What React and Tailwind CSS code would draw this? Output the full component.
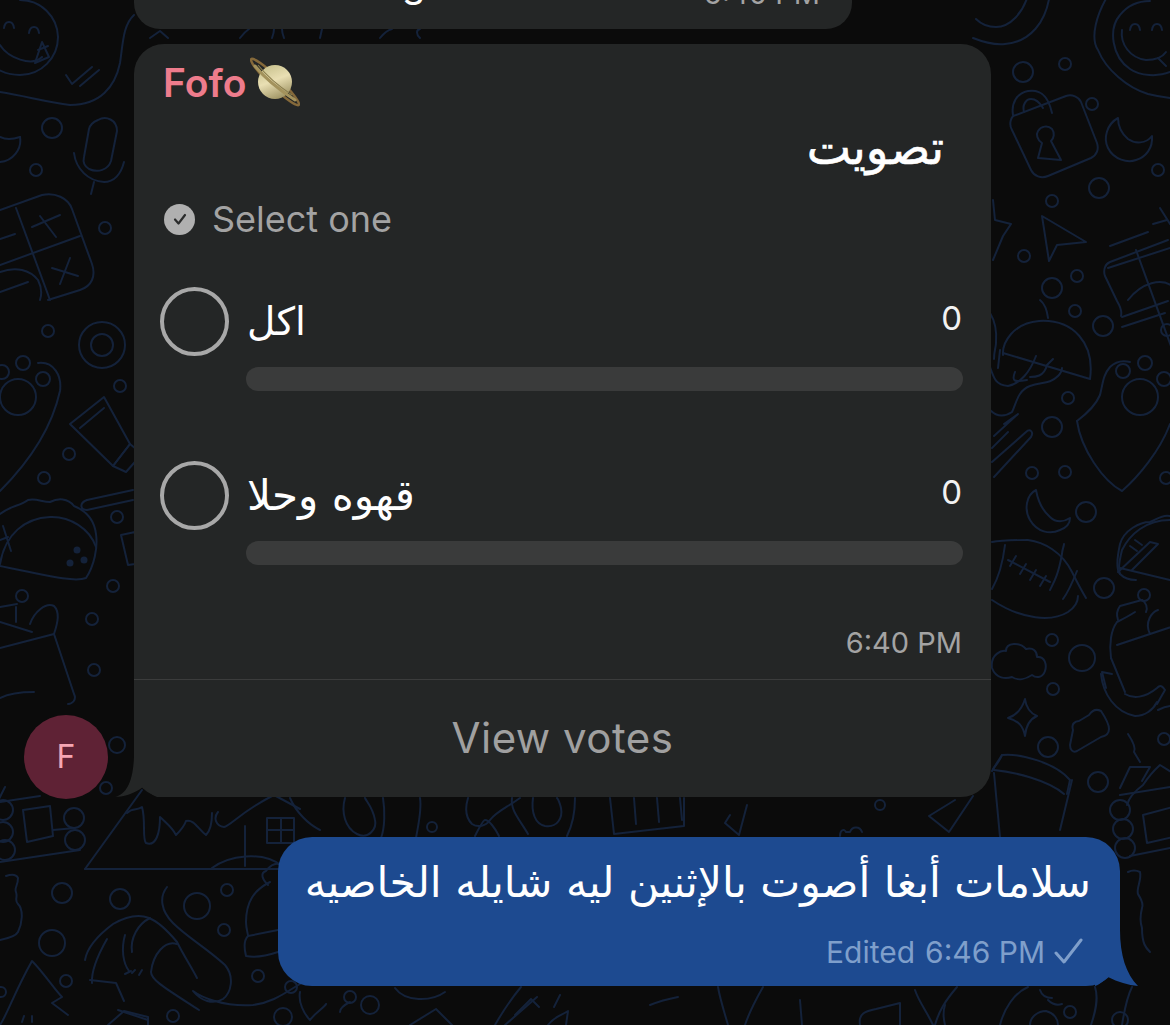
const circles = [
  [52,128,10],[36,170,6],[105,228,6],[48,331,6],[120,386,6],[69,454,6],[44,478,6],[117,517,6],[113,586,6],[22,596,6],[92,619,6],[94,670,6],
  [102,345,11],[102,345,23],[18,397,18],[23,363,7],[43,379,7],[2,372,7],
  [1023,72,10],[1065,64,6],[1092,104,6],[1099,188,10],[1052,201,6],[1158,170,6],[1024,256,6],[1052,288,10],[1077,276,6],
  [1075,311,6],[1103,326,10],[1068,398,6],[1052,427,10],[1032,473,6],[1065,472,6],[1086,512,10],[1104,588,10],[1144,595,6],[1166,478,6],
  [1123,371,7],[1145,363,7],[1140,397,18],[1164,379,7],[1167,330,6],
  [1052,640,6],[1082,658,13],[1053,689,6],[1048,747,10],[1098,782,10],[1164,739,6],
  [1120,810,10],[1123,829,10],[1125,848,10],
  [62,893,10],[120,899,10],[52,943,13],[66,981,6],[197,906,13],[227,890,6],[224,930,6],[258,976,6],[283,1017,9],[173,1016,6],[291,987,6],[1,992,5],
  [117,745,8],[106,788,6],
  [74,818,10],[75,840,10],[3,810,10],[3,832,10],[5,850,10],
  [880,805,5],[432,827,5],
  [350,997,6],[370,1005,9],[1070,1012,6],[1120,1020,8],
]

const doodles = [
  // left top smiley, ticks, big curve
  'M58 37a38 38 0 0 1-38 38C5 75-8 68-15 58', 'M20 0a38 38 0 0 1 38 37', 'M0 45c8 13 32 22 42 12',
  'M4 28c1-8 9-8 10 0', 'M29 33c1-8 9-8 10 0', 'M42 42l7 15-14 6z', 'M38 50l10-4',
  'M66 75l6 9 20-17', 'M80 86l19-16',
  'M0 92c25 4 47 10 70 13 30 0 45-18 50-42 3-20 3-38 14-48',
  // mic
  'M98 120c8-5 19 0 19 11l-6 30c-3 9-13 12-22 8-5-3-6-8-5-12l5-28c1-4 4-7 9-9z',
  'M74 153c2 16 14 28 30 29 10 0 17-8 20-20', 'M94 182l-3 12',
  // left moon
  'M20 137c-6 2-14 3-20 0', 'M20 137c2 12-7 24-20 25',
  // calculator left
  'M0 210l42-15c13-3 26 3 30 14l20 55c4 12 0 22-12 26l-32 10', 'M16 208l34 92', 'M0 265l80-29', 'M0 239l15-5',
  'M40 216l16 21', 'M32 227l28-12', 'M52 268l26 8', 'M60 284l10-26',
  'M0 272c16-6 30-2 38 8 3 6 4 14 2 20', 'M0 292l28-10',
  // shield left and tube
  'M0 491c30-30 52-64 60-100 2-15-6-30-22-28',
  'M70 424l34-27 26 47-17 22z', 'M80 428l24-20', 'M113 466l17-22 12 10-16 18z',
  'M87 500l46-10', 'M87 510l46-10', 'M87 500c-8 3-7 10 0 10',
  'M121 535l14-3 0 32-7 1z',
  // taco left
  'M0 514c10-8 20-8 28-14 8-2 14 2 22 2 8-4 18-4 24 4 10 4 20 12 22 28 2 14-2 32-10 44-10 4-28 0-86-12',
  'M0 564c5-30 25-46 50-47 20-1 40 12 46 30', 'M3 526l8 25', 'M0 540l8-3',
  // bag left
  'M0 648l54-14 20 60c3 6-2 10-6 10', 'M54 634c4-12 6-22 0-28-8-4-20 6-24 18', 'M16 607l0 15', 'M0 607l17-3',
  'M0 622l32 10', 'M0 698c10-5 22-6 34-6',
  // calculators right
  'M1168 240l-58 22c-5 2-7 8-5 14l12 25c3 5 5 11 4 15', 'M1136 250l40 110', 'M1108 268l62-20', 'M1110 246l38-14',
  'M1160 208l10 16', 'M1153 224l14-4', 'M1128 300c14-18 34-22 44-14', 'M1122 327l43-14', 'M1122 317l46-16',
  // top right arcs
  'M1050-8c-3 30-20 50-45 52-10 1-22-2-32-6', 'M1028-5c-5 18-18 32-32 32-8 0-14-2-20-8',
  'M1110-8c-14 22-20 46-12 58 8 20 30 38 50 44 8 2 14 3 22 4',
  'M1170 72c-12 5-30 4-40-3-18-12-22-40-10-54 8-10 18-14 30-14',
  'M1122 30c-2 14 8 28 24 30 8 0 16-2 20-8', 'M1130 30c1-8 9-8 10 0', 'M1152 30c1-8 9-8 10 0', 'M1158 58l8 8',
  // lock
  'M1012 130c-3-5-2-14 4-15l50-19c6-2 13 1 15 6l16 41c2 6 0 12-6 15l-43 18c-7 3-14 0-17-6z',
  'M1013 115c-2-12 4-22 15-24 12-2 20 4 24 22', 'M1024 112c-2-7 2-13 7-13s9 4 12 9',
  'M1038 158l4-15c-5-3-6-9-4-12 3-5 10-6 14-2 3 4 2 9-1 12l10 19z',
  // moon right
  'M1118 118c-11 6-15 20-10 30 6 12 20 15 28 12 10-3 17-12 16-24-6 8-17 8-24 3-7-6-10-13-10-21z',
  // star and arrow right
  'M1042 216l7 45 8-16 29-3z', 'M993 200l2 20 16 4-8 12-10 24',
  // helmet right
  'M1003 355c-1-12 10-32 36-34 34-2 56 22 51 58l-87-26', 'M990 313c5 8 7 18 6 30 0 4-2 8-2 16', 'M1000 350l-2 18', 'M990 367c4 12 6 18 18 19 12-2 22-14 28-30',
  'M1030 377c5 0 14 0 17-12l6-6', 'M1015 372c-4 10 0 10 12 8', 'M990 410c8 8 16 6 22 2 4-8 6-22 18-26 12-4 20-2 28-10 2-2 4-6 4-8',
  'M1040 300c5 4 7 10 8 18',
  // tally and moon
  'M992 462l34-30c4-4 8 0 5 5l-37 40', 'M992 448l16-16', 'M1004 424l14-10-24 22', 'M1036 490c-10 5-12 20-6 30 7 12 20 15 30 10 8-3 10-8 10-12-6 4-14 5-20-1-7-6-12-16-14-27z',
  // shield right
  'M1077 421c8-6 18-14 23-26 3-12 3-20 10-28 5-5 12-7 20-5', 'M1077 421c4 28 26 60 45 70 16-14 38-40 48-67',
  // football
  'M992 542c10-2 22-2 36-2 16 2 34 12 44 32 4 8 8 16 14 26', 'M1050 590c4-8 8-14 12-36 0-4 2-8 2-10', 'M1063 599c6-8 10-18 14-28', 'M1005 545c-2 16-6 32-13 44',
  'M1008 560l42 22', 'M1016 556l-6 10', 'M1026 564l-6 10', 'M1036 570l-6 10', 'M1046 576l-6 10',
  'M992 600c30 20 60 22 76 12 6-4 10-10 10-16',
  // taco right
  'M1170 516c-8-2-14 4-20 6-10 0-26 8-30 22-3 14-4 26 0 30 4 4 10 6 16 6', 'M1170 520c-24 0-40 14-48 30-2 8-4 20-2 24', 'M1118 572l32-30 8 2-26 26', 'M1135 540l7 5M1130 546l7 5', 'M1120 568l50 12',
  // cloud
  'M992 668c-2-14 10-18 14-17 0-9 14-9 20-2 7-2 11 2 11 8 8-1 10 8 8 14-2 6-8 8-13 4-6 4-14 6-20 2-6 2-16 2-20-9z',
  // star
  'M1025 699c1 8 5 14 12 17-7 3-11 9-12 20-2-10-6-15-17-18 9-3 14-9 17-19z',
  // bottle and banana
  'M1117 645l60-20', 'M1111 658c-2-14 0-28 6-36 6-3 12-6 18-10', 'M1118 620c-2-6-1-10 2-14l22-6c4 2 6 8 4 12', 'M1150 634c-6-12 2-22 8-24', 'M1111 658l14 34',
  'M1101 674c2 20 14 38 34 42 10 0 18-6 22-14', 'M1112 674l-10-2 4 16', 'M1125 694c8 5 20 4 32-6 2-2 4-4 8 2l-8 14', 'M1158 710c4-2 10-4 14-4',
  // rounded shape
  'M1073 730c-2-6 2-9 6-9l10-6c4-6 8-6 12-4 4 6 8 14 8 18 0 4-3 7-8 8l-24 14c-4 2-7-1-7-6z',
  // cup
  'M993 769l9-14c18-2 54 8 68 25l-3 14', 'M994 770c20 2 54 10 70 24', 'M1002 755c-2 6-8 12-10 16', 'M994 773l6 64', 'M1072 780l-12 50',
  // log stack
  'M1120 788l10-21 20 0 -8 14', 'M1127 805c2-8 8-14 16-20 4-6 8-12 17-20l16 10', 'M1120 795l50-8', 'M1143 815l30-8 0 30-26 6z', 'M1130 856l40-8',
  'M1128 872c4-2 8-2 12 0 2 8-4 16-2 22 2 4 6 8 4 14-2 8-2 14 0 20 0 16 4 20 8 24',
  'M1128 734c4 6 8 14 6 18l6 10',
  // bottom left logs
  'M5 787l-8 16', 'M23 810l27-4 3 30-26 6z', 'M0 862l80-12', 'M0 802l40-6', 'M53 830l22-2',
  // key-like and triangle
  'M6 876c6-2 10-2 12 2 0 8-4 10-2 14 2 6-2 8 2 12 6 6 4 20 0 28-2 4-8 6-18 8', 'M0 1025c8-12 14-32 32-64 12 12 22 28 30 36l-10 6 16 12', 'M22 1022l2-6M32 1022l0-6',
  // mountain and house
  'M85 869L142 790', 'M85 869H280', 'M127 813c6-6 10-2 15-6 4 14 0 32 4 36 10 4 14-10 14-26 6 6 12 10 16 18 4-4 8-8 10-14 8-2 12 8 20 14 4-4 6-10 6-22', 'M218 812c-5 6-2 14 6 15 6-1 18-16 50-32l26 14',
  'M245 826v40', 'M267 818h27v25h-27zM281 818v25M267 830h27', 'M212 868c16-12 50-18 70-2',
  // shrimp
  'M85 960c2-12 12-24 28-36 14-8 26-10 36-6 10 4 18 12 28 24 8 16 14 24 20 36', 'M107 939c-8 14-16 30-15 44', 'M150 918c-12 6-20 20-18 34',
  'M177 944c-12-4-24 10-26 28 0 8 14 16 48 38', 'M125 935c-4 14-2 28 4 36', 'M90 980l26 3 8 18', 'M118 1010l30 10', 'M108 1025l16-14 24 6 0 8',
  'M125 974l6-3M132 973l3-3M139 975l3-5',
  // long curve and santa hat
  'M167 887c-8 10-6 24 6 36 14 14 32 24 52 42 10 12 6 28-2 34-10 6-22 2-30-8 8 6 30 16 60 14 16-2 26-8 42-18 10-6 12-8 20-8',
  'M270 882c-16 8-24 20-24 40 0 6 2 12 2 14-4 4-4 12-2 20 10 2 20 0 32-4', 'M248 936l30-6', 'M268 885c-6-6-8-12-2-14 6-8 12-8 14-6',
  // gap top shapes
  'M150 38l10-7 8 7', 'M240 38c3-4 6-7 9-9', 'M272 38c2-5 2-8 2-9', 'M284 38c-2-5-2-8-2-9', 'M320 38l2-9', 'M380 38c4-5 8-8 12-9', 'M420 38c-4-4-4-8 0-9',
  // gap below poll
  'M290 798c6 14 18 26 30 32', 'M345 798c-4 14 0 30 12 36 12 6 20-6 18-14-2-12-8-18-10-22', 'M383 798c2 12 2 30-2 40', 'M420 798c2 12-2 28-4 40',
  'M468 798c-3 10-2 20 4 26 6 4 14 2 18-4 6-8 16-12 30-22', 'M475 836c4-8 8-16 10-16 4 0 10 8 14 16',
  'M512 798c-2 12 8 22 16 36', 'M533 798c-2 14 2 26 12 28 12 2 18-8 16-18-1-4-2-8-4-10', 'M575 798c0 14-2 26-8 38',
  'M610 798l4 36 70-8 0-28', 'M634 798l2 26M657 798l2 24M680 798l2 22', 'M730 815l-5 8 14 12 8-30',
  'M840 836c0-6 4-8 6-4l4 0c2-6 10-6 12 0', 'M955 800l-26 16 20 16 24-36',
  // under the blue bubble
  'M300 992c-2 10 4 22 10 28 6-8 14-12 16-16', 'M340 1012c0-4 6-8 10-10', 'M395 988c10 14 36 14 50 4', 'M410 1025l26-16 16 16',
  'M495 1025c8-14 16-26 26-38', 'M505 1025l32-28', 'M515 1015l16-16 8 8', 'M548 1025c6-8 10-8 20-14l-2 14', 'M560 995l-6 12',
  'M650 1005c10-4 18-6 28-8', 'M718 987c2 12 6 24 10 38', 'M745 1025c4-12 10-24 18-38', 'M800 1000l2 25',
  'M860 1025c-2-12 6-14 16-16l24-6 0 22', 'M915 990c4 12 12 22 18 35', 'M945 1025c-2-8-2-14 0-20', 'M935 1025c4-14 10-24 22-38',
  'M1000 1025c4-16 14-32 28-38', 'M1040 990c2 6 6 8 12 8', 'M1048 1000c4 4 8 6 14 4', 'M1030 1025c0-8 8-14 16-14 8 2 12 8 12 14', 'M1095 987c4 12 0 26-4 38', 'M1132 987c-6 12-8 26-10 38',
]

function Doodles() {
  return (
    <svg className="absolute inset-0" width="1170" height="1025" viewBox="0 0 1170 1025" fill="none" stroke="#14223a" strokeWidth="2" strokeLinecap="round" strokeLinejoin="round">
      {doodles.map((d, i) => <path key={i} d={d} />)}
      {circles.map((c, i) => <circle key={i} cx={c[0]} cy={c[1]} r={c[2]} />)}
      <circle cx="77" cy="550" r="3.5" fill="#14223a" stroke="none" />
      <circle cx="84" cy="560" r="3.5" fill="#14223a" stroke="none" />
      <circle cx="70" cy="563" r="3.5" fill="#14223a" stroke="none" />
    </svg>
  )
}

function Saturn() {
  return (
    <svg width="50" height="50" viewBox="0 0 50 50" className="shrink-0">
      <defs>
        <linearGradient id="planet" x1="0.3" y1="0" x2="0.7" y2="1">
          <stop offset="0" stopColor="#c9c28f" />
          <stop offset="0.45" stopColor="#e9dfb3" />
          <stop offset="1" stopColor="#9b9060" />
        </linearGradient>
      </defs>
      <ellipse cx="25" cy="25" rx="33" ry="5" transform="rotate(44 25 25)" fill="none" stroke="#85693a" strokeWidth="2.5" />
      <circle cx="25" cy="25" r="17" fill="url(#planet)" />
      <path d="M5 9C14 20 28 32 45 43" fill="none" stroke="#a3925c" strokeWidth="3" strokeLinecap="round" />
      <path d="M8 8C16 18 30 30 42 38" fill="none" stroke="#8a7d4c" strokeWidth="1.2" />
    </svg>
  )
}

function PollOption({ label, size, className }) {
  return (
    <div className={className}>
      <div className="flex items-center">
        <div className="w-[69px] h-[69px] rounded-full border-[4px] border-[#a8a8a8] shrink-0" />
        <div dir="rtl" className={`ml-[18px] text-white leading-[50px] font-['DejaVu_Sans',sans-serif] ${size}`}>{label}</div>
        <div className="ml-auto mr-[3px] mb-[8px] text-[33px] leading-[40px] text-[#f2f2f2]">0</div>
      </div>
      <div className="ml-[86px] mr-[2px] mt-[11px] h-[24px] rounded-full bg-[#3a3b3b]" />
    </div>
  )
}

export default function App() {
  return (
    <div className="relative h-[1025px] w-[1170px] overflow-hidden bg-[#0b0b0b] font-['Inter',sans-serif]">
      <Doodles />

      <div className="relative">
        {/* previous message, cut by the top edge */}
        <div className="ml-[134px] w-[718px] h-[29px] rounded-b-[26px] bg-[#242626] overflow-hidden flex items-end justify-between pl-[268px] pr-[32px] pb-[20px]">
          <span className="text-white text-[38px] leading-[38px] -translate-y-[7px]">g</span>
          <span className="text-[#a3a3a3] text-[29px] leading-[30px]">6:40 PM</span>
        </div>

        <div className="mt-[15px] ml-[24px] flex items-end">
          <div className="w-[84px] h-[84px] rounded-full bg-[#5f2235] text-[#f5a6b3] text-[32px] flex items-center justify-center -mb-[2px] mr-[26px] shrink-0 relative z-10">F</div>

          {/* poll bubble */}
          <div className="relative w-[857px] h-[753px] rounded-[30px] bg-[#242626]">
            <svg className="absolute left-[-20px] bottom-0" width="50" height="40" viewBox="0 0 50 40">
              <path d="M1 40C8 40 20 37 29 30C33 34 38 38 43 40H50V0H20C19 24 13 37 1 40Z" fill="#242626" />
            </svg>
            <div className="relative pl-[29px] pr-[26px] pt-[15px]">
              <div className="flex items-start h-[48px]">
                <span className="text-[#ee7c8c] text-[39px] leading-[48px] font-semibold">Fofo</span>
                <span className="ml-[4px] -mt-[2px]"><Saturn /></span>
              </div>
              <div dir="rtl" className="mt-[11px] pr-[21px] text-white text-[47px] leading-[60px] [-webkit-text-stroke:0.6px_white] font-['DejaVu_Sans',sans-serif]">تصويت</div>
              <div className="mt-[21px] ml-[1px] flex items-center gap-[17px]">
                <div className="w-[31px] h-[31px] rounded-full bg-[#b0b0b0] flex items-center justify-center shrink-0">
                  <svg width="20" height="20" viewBox="0 0 20 20" fill="none" stroke="#2b2c2c" strokeWidth="2.2" strokeLinecap="round" strokeLinejoin="round">
                    <path d="M5 10.5l3.5 4L15 6" />
                  </svg>
                </div>
                <span className="text-[#a3a3a3] text-[36px] leading-[40px]">Select one</span>
              </div>
              <div className="-ml-[3px]">
                <PollOption label="اكل" size="text-[39px]" className="mt-[48px]" />
                <PollOption label="قهوه وحلا" size="text-[42px]" className="mt-[70px]" />
              </div>
              <div className="mt-[58px] mr-[3px] text-right text-[#a3a3a3] text-[29px] leading-[40px]">6:40 PM</div>
            </div>
            <div className="mt-[16px] border-t border-[#3b3c3c] h-[117px] flex items-center justify-center text-[#a0a0a0] text-[42px] tracking-[0.5px] pb-[2px]">View votes</div>
          </div>
        </div>

        {/* own message */}
        <div className="relative mt-[40px] ml-[278px] w-[842px] h-[149px] rounded-[34px] bg-[#1d4a90] pt-[17px] pr-[29px]">
          <svg className="absolute right-[-18px] bottom-0" width="43" height="56" viewBox="-3 0 43 56">
            <path d="M22 0C22 25 28 44 40 56C30 55 20 52 10 47C6 50 3 54 -3 56V0Z" fill="#1d4a90" />
          </svg>
          <div dir="rtl" className="relative text-white text-[42.5px] leading-[58px] whitespace-nowrap font-['DejaVu_Sans',sans-serif]">سلامات أبغا أصوت بالإثنين ليه شايله الخاصيه</div>
          <div className="relative mt-[20px] mr-[8px] flex justify-end items-center text-[#7f9fcb] text-[30px] leading-[40px]">
            <span>Edited</span>
            <span className="ml-[10px]">6:46 PM</span>
            <svg className="ml-[8px]" width="30" height="30" viewBox="0 0 30 30" fill="none" stroke="#7f9fcb" strokeWidth="3" strokeLinecap="round" strokeLinejoin="round">
              <path d="M3 16l8 9L28 3" />
            </svg>
          </div>
        </div>
      </div>
    </div>
  )
}
